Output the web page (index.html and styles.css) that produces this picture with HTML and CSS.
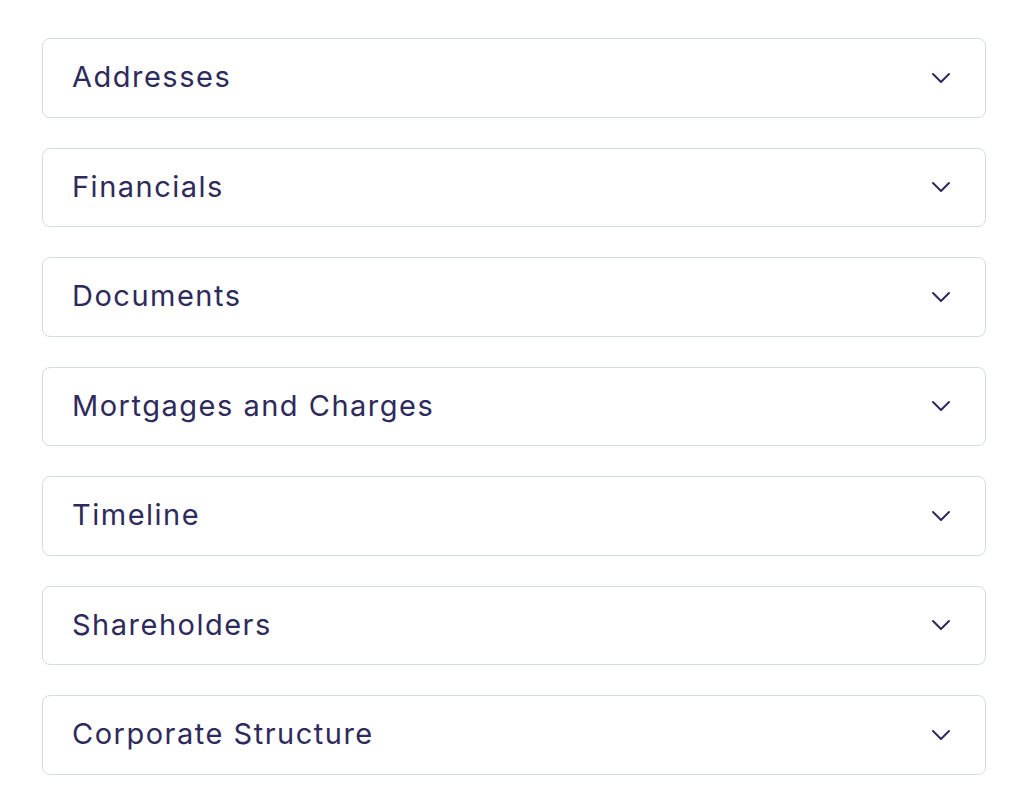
FILE: index.html
```html
<!DOCTYPE html>
<html lang="en">
<head>
    <meta charset="UTF-8"/>
    <meta name="viewport" content="width=device-width, initial-scale=1.0"/>
    <title>Company sections</title>
    <link rel="stylesheet" href="styles.css">
</head>
<body>
<div class="sections">
    <div class="section">
        <span class="section-title">Addresses</span>
        <svg class="chevron" viewBox="0 0 20 12"><path d="M2 2l8 8 8-8"/></svg>
    </div>
    <div class="section">
        <span class="section-title">Financials</span>
        <svg class="chevron" viewBox="0 0 20 12"><path d="M2 2l8 8 8-8"/></svg>
    </div>
    <div class="section">
        <span class="section-title">Documents</span>
        <svg class="chevron" viewBox="0 0 20 12"><path d="M2 2l8 8 8-8"/></svg>
    </div>
    <div class="section">
        <span class="section-title">Mortgages and Charges</span>
        <svg class="chevron" viewBox="0 0 20 12"><path d="M2 2l8 8 8-8"/></svg>
    </div>
    <div class="section">
        <span class="section-title">Timeline</span>
        <svg class="chevron" viewBox="0 0 20 12"><path d="M2 2l8 8 8-8"/></svg>
    </div>
    <div class="section">
        <span class="section-title">Shareholders</span>
        <svg class="chevron" viewBox="0 0 20 12"><path d="M2 2l8 8 8-8"/></svg>
    </div>
    <div class="section">
        <span class="section-title">Corporate Structure</span>
        <svg class="chevron" viewBox="0 0 20 12"><path d="M2 2l8 8 8-8"/></svg>
    </div>
</div>
</body>
</html>
```

FILE: styles.css
```css
* {
    margin: 0;
    padding: 0;
    box-sizing: border-box;
}

body {
    background-color: #ffffff;
    font-family: 'Inter', 'Noto Sans', sans-serif;
    color: #2e2a5c;
}

.sections {
    padding: 38px 37px 0 42px;
    display: flex;
    flex-direction: column;
    gap: 30px;
}

.section {
    height: 79.5px;
    border: 1px solid #d2dde3;
    border-radius: 8px;
    display: flex;
    align-items: center;
    justify-content: space-between;
    padding: 0 34px 0 29px;
}

.section-title {
    font-size: 29px;
    letter-spacing: 1.5px;
    line-height: 1;
    margin-top: -2px;
}

.chevron {
    width: 20px;
    height: 12px;
    fill: none;
    stroke: #2e2a5c;
    stroke-width: 2;
    stroke-linecap: round;
    stroke-linejoin: round;
}
```
